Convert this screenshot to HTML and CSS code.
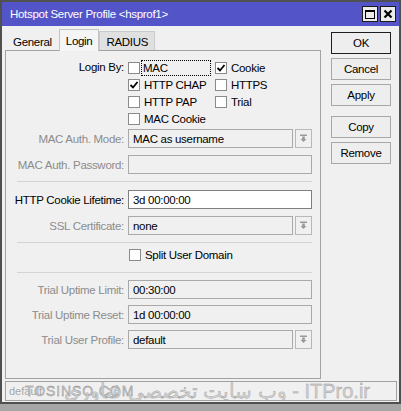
FILE: index.html
```html
<!DOCTYPE html>
<html>
<head>
<meta charset="utf-8">
<link rel="stylesheet" href="styles.css">
</head>
<body>
<div class="window">
  <div class="titlebar">
    <span class="title">Hotspot Server Profile &lt;hsprof1&gt;</span>
    <div class="tbtns">
      <span class="tbtn"><span class="maxicon"></span></span>
      <span class="tbtn"><svg width="10" height="10" viewBox="0 0 10 10"><path d="M1.5 1.5 L8.5 8.5 M8.5 1.5 L1.5 8.5" stroke="#000" stroke-width="2.2"/></svg></span>
    </div>
  </div>
  <div class="content">
    <div class="main">
      <div class="tabs">
        <div class="tab">General</div>
        <div class="tab active">Login</div>
        <div class="tab dark">RADIUS</div>
      </div>
      <div class="panel">
        <div class="row loginby">
          <div class="label">Login By:</div>
          <div class="checks">
            <div class="chk"><span class="box"></span><span class="focus">MAC</span></div>
            <div class="chk"><span class="box"><svg width="10" height="10" viewBox="0 0 10 10"><path d="M1.5 5 L4 7.5 L8.5 2" stroke="#000" stroke-width="1.8" fill="none"/></svg></span><span>Cookie</span></div>
            <div class="chk"><span class="box"><svg width="10" height="10" viewBox="0 0 10 10"><path d="M1.5 5 L4 7.5 L8.5 2" stroke="#000" stroke-width="1.8" fill="none"/></svg></span><span>HTTP CHAP</span></div>
            <div class="chk"><span class="box"></span><span>HTTPS</span></div>
            <div class="chk"><span class="box"></span><span>HTTP PAP</span></div>
            <div class="chk"><span class="box"></span><span>Trial</span></div>
            <div class="chk"><span class="box"></span><span>MAC Cookie</span></div>
          </div>
        </div>
        <div class="row field-row first">
          <div class="label dim">MAC Auth. Mode:</div>
          <div class="field dis short">MAC as username</div>
          <div class="dd"><svg width="9" height="9" viewBox="0 0 9 9"><rect x="1" y="0.5" width="7" height="1.5" fill="#9a9a9a"/><path d="M3.2 2.5 H5.8 V5 H7.5 L4.5 8 L1.5 5 H3.2 Z" fill="#9a9a9a"/></svg></div>
        </div>
        <div class="row field-row">
          <div class="label dim">MAC Auth. Password:</div>
          <div class="field dis"></div>
        </div>
        <div class="sep"></div>
        <div class="row field-row">
          <div class="label">HTTP Cookie Lifetime:</div>
          <div class="field on">3d 00:00:00</div>
        </div>
        <div class="row field-row">
          <div class="label dim">SSL Certificate:</div>
          <div class="field dis short">none</div>
          <div class="dd"><svg width="9" height="9" viewBox="0 0 9 9"><rect x="1" y="0.5" width="7" height="1.5" fill="#9a9a9a"/><path d="M3.2 2.5 H5.8 V5 H7.5 L4.5 8 L1.5 5 H3.2 Z" fill="#9a9a9a"/></svg></div>
        </div>
        <div class="sep"></div>
        <div class="row split">
          <div class="chk"><span class="box"></span><span>Split User Domain</span></div>
        </div>
        <div class="sep sep2"></div>
        <div class="row field-row">
          <div class="label dim">Trial Uptime Limit:</div>
          <div class="field dis">00:30:00</div>
        </div>
        <div class="row field-row tight">
          <div class="label dim">Trial Uptime Reset:</div>
          <div class="field dis">1d 00:00:00</div>
        </div>
        <div class="row field-row tight">
          <div class="label dim">Trial User Profile:</div>
          <div class="field dis short">default</div>
          <div class="dd"><svg width="9" height="9" viewBox="0 0 9 9"><rect x="1" y="0.5" width="7" height="1.5" fill="#9a9a9a"/><path d="M3.2 2.5 H5.8 V5 H7.5 L4.5 8 L1.5 5 H3.2 Z" fill="#9a9a9a"/></svg></div>
        </div>
      </div>
    </div>
    <div class="buttons">
      <div class="btn default">OK</div>
      <div class="btn">Cancel</div>
      <div class="btn">Apply</div>
      <div class="btn gap">Copy</div>
      <div class="btn">Remove</div>
    </div>
  </div>
  <div class="status">
    <span class="st-text">default</span>
    <span class="wm-left">TOSINSO.COM</span>
    <span class="wm-right" dir="rtl">ITPro.ir - وب سایت تخصصی فناوری</span>
  </div>
</div>
</body>
</html>
```
FILE: styles.css
```css
* { box-sizing: border-box; }
html, body { margin: 0; padding: 0; }
body {
  width: 401px;
  height: 411px;
  overflow: hidden;
  background: #a6a6a6;
  font-family: "Liberation Sans", Arial, sans-serif;
  font-size: 11.5px;
  letter-spacing: -0.3px;
  color: #000;
}
.window {
  width: 401px;
  height: 404px;
  border: 2px solid #505050;
  background: #f0f0f0;
  display: flex;
  flex-direction: column;
}
.titlebar {
  height: 24px;
  flex: none;
  background: #5454c9;
  display: flex;
  align-items: center;
  padding-left: 8px;
  color: #fff;
}
.title { flex: 1; }
.tbtns { display: flex; gap: 2px; margin-right: 3px; }
.tbtn {
  width: 16px;
  height: 16px;
  background: #ececec;
  border: 1px solid #1a1a1a;
  display: flex;
  align-items: center;
  justify-content: center;
}
.maxicon {
  width: 10px;
  height: 9px;
  border: 1px solid #000;
  border-top-width: 2px;
}
.content {
  flex: none;
  display: flex;
  padding: 3px 0 0 3px;
}
.main { width: 316px; display: flex; flex-direction: column; }
.tabs {
  display: flex;
  height: 21px;
  align-items: flex-end;
  padding-left: 1px;
}
.tab {
  height: 19px;
  padding: 2px 6px 0;
  display: flex;
  align-items: center;
  border: 1px solid transparent;
  border-bottom: none;
}
.tab.active {
  height: 22px;
  margin-bottom: -1px;
  background: #f5f5f5;
  border-color: #c4c4c4;
  position: relative;
  z-index: 1;
  padding-top: 0;
}
.tab.dark { background: #e0e0e0; border-color: #cacaca; }
.panel {
  height: 329px;
  border: 1px solid #a2a2a2;
  background: #f0f0f0;
  padding-top: 8px;
  display: flex;
  flex-direction: column;
}
.row { display: flex; align-items: center; }
.label {
  width: 122px;
  flex: none;
  text-align: right;
  padding-right: 4px;
  white-space: nowrap;
}
.label.dim { color: #8c8c8c; }
.loginby { align-items: flex-start; }
.loginby .label { line-height: 17px; }
.checks {
  display: grid;
  grid-template-columns: 87px auto;
  grid-auto-rows: 17px;
}
.chk { display: flex; align-items: center; gap: 4px; white-space: nowrap; }
.box {
  width: 12px;
  height: 12px;
  flex: none;
  background: #fff;
  border: 1px solid #8a8a8a;
  display: flex;
  align-items: center;
  justify-content: center;
}
.focus {
  outline: 1px dotted #000;
  padding: 0 42px 0 1px;
  margin-left: -2px;
  line-height: 14px;
}
.field-row { margin-top: 7px; }
.field-row.first { margin-top: 2px; }
.field-row.tight { margin-top: 6px; }
.field {
  width: 184px;
  height: 19px;
  border: 1px solid #a9a9a9;
  padding: 0 4px;
  display: flex;
  align-items: center;
  white-space: nowrap;
}
.field.short { width: 165px; }
.field.on { background: #fff; border-color: #7f7f7f; }
.dd {
  width: 17px;
  height: 19px;
  margin-left: 2px;
  border: 1px solid #b8b8b8;
  display: flex;
  align-items: center;
  justify-content: center;
}
.sep {
  height: 1px;
  background: #d4d4d4;
  margin: 7px 8px 0 11px;
}
.sep + .field-row { margin-top: 8px; }
.split { padding-left: 123px; height: 12px; margin-top: 6px; }
.sep.sep2 { margin-top: 11px; }
.sep.sep2 + .field-row { margin-top: 7px; }
.buttons {
  display: flex;
  flex-direction: column;
  gap: 4px;
  margin: 3px 0 0 10px;
}
.btn {
  width: 60px;
  height: 22px;
  border: 1px solid #a8a8a8;
  background: #eeeeee;
  display: flex;
  align-items: center;
  justify-content: center;
}
.btn.default { border-color: #1e1e1e; }
.btn.gap { margin-top: 6px; }
.status {
  position: relative;
  margin: 2px 2px 0 3px;
  height: 20px;
  border: 1px solid #a2a2a2;
  background: #f0f0f0;
  overflow: hidden;
  letter-spacing: 0;
}
.st-text {
  position: absolute;
  left: 3px;
  top: 3px;
  color: #a8a8a8;
  font-size: 11px;
}
.wm-left {
  position: absolute;
  left: 19px;
  top: 1px;
  font-size: 14px;
  color: #d0d0d0;
  -webkit-text-stroke: 0.35px #7a7a7a;
  letter-spacing: 0.9px;
}
.wm-right {
  position: absolute;
  right: 26px;
  top: -3px;
  font-size: 20px;
  color: #d0d0d0;
  -webkit-text-stroke: 0.35px #9a9a9a;
  white-space: nowrap;
}
```
